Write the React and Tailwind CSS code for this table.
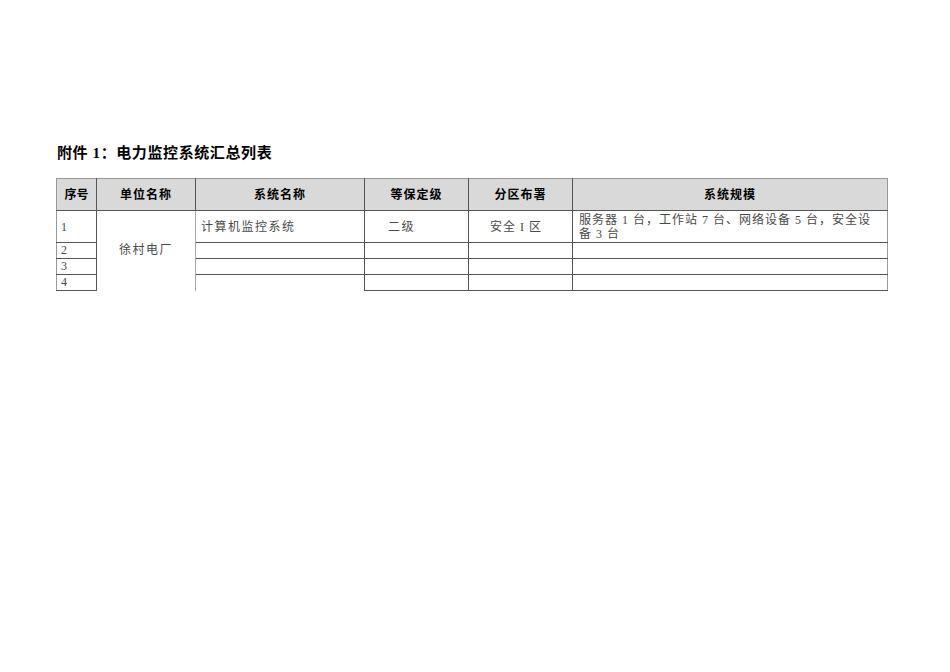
import React from "react";

const serif = { fontFamily: '"Liberation Serif", "Noto Sans CJK SC", serif' };

export default function App() {
  const bd = "border border-[#555]";
  return (
    <div className="w-[950px] h-[672px] bg-white text-[#222]" style={serif}>
      <div className="pt-[143px] pl-[57px] text-[15px] leading-[20px] font-bold text-black tracking-[0.6px]">
        附件 1：电力监控系统汇总列表
      </div>
      <table className="ml-[56px] mt-[15px] border-collapse table-fixed w-[831px] text-[12px]">
        <colgroup>
          <col className="w-[40px]" />
          <col className="w-[99px]" />
          <col className="w-[169px]" />
          <col className="w-[104px]" />
          <col className="w-[104px]" />
          <col className="w-[315px]" />
        </colgroup>
        <thead>
          <tr className="h-[32px] bg-[#d9d9d9] font-bold text-black">
            <th className={`${bd} border-t-[#999] border-l-[#999] font-bold`}>序号</th>
            <th className={`${bd} border-t-[#999] font-bold tracking-[1px]`}>单位名称</th>
            <th className={`${bd} border-t-[#999] font-bold tracking-[1px]`}>系统名称</th>
            <th className={`${bd} border-t-[#999] font-bold tracking-[1px]`}>等保定级</th>
            <th className={`${bd} border-t-[#999] font-bold tracking-[1px]`}>分区布署</th>
            <th className={`${bd} border-t-[#999] border-r-[#999] font-bold tracking-[1px]`}>系统规模</th>
          </tr>
        </thead>
        <tbody className="text-[#4a4a4a] tracking-[1.5px] font-normal">
          <tr className="h-[32px]">
            <td className={`${bd} border-l-[#999] pl-[4px] align-middle`}>1</td>
            <td rowSpan={4} className="border-l border-[#555] border-r border-r-[#aaa] text-center align-middle pb-[2px]">
              徐村电厂
            </td>
            <td className={`${bd} border-l-[#aaa] pl-[5px] align-middle`}>计算机监控系统</td>
            <td className={`${bd} pl-[23px] align-middle`}>二级</td>
            <td className={`${bd} pl-[21px] align-middle tracking-[1px]`}>安全 I 区</td>
            <td className={`${bd} border-r-[#999] pl-[6px] leading-[14px] align-middle whitespace-nowrap tracking-[1px]`}>
              服务器 1 台，工作站 7 台、网络设备 5 台，安全设
              <br />
              备 3 台
            </td>
          </tr>
          {["2", "3", "4"].map((n, i) => (
            <tr key={n} className="h-[16px]">
              <td className={`${bd} border-l-[#999] pl-[4px] leading-[15px] align-bottom text-[#4a4a4a]`}>{n}</td>
              <td
                className={`border-l border-[#aaa] border-r border-r-[#555] ${
                  i < 2 ? "border-b border-b-[#555]" : ""
                } border-t border-t-[#555]`}
              ></td>
              <td className={`${bd}`}></td>
              <td className={`${bd}`}></td>
              <td className={`${bd} border-r-[#999]`}></td>
            </tr>
          ))}
        </tbody>
      </table>
    </div>
  );
}
